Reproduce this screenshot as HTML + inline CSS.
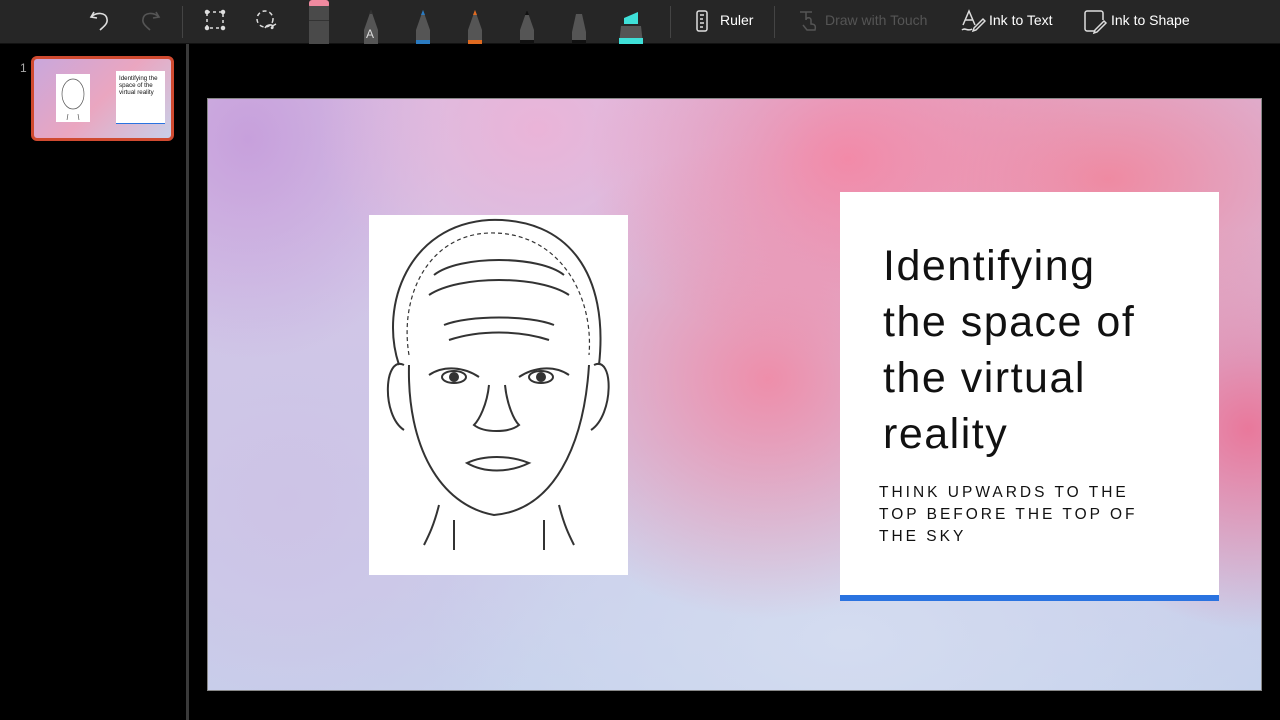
<!DOCTYPE html>
<html><head><meta charset="utf-8"><style>
*{margin:0;padding:0;box-sizing:border-box}
body{width:1280px;height:720px;background:#000;overflow:hidden;font-family:"Liberation Sans",sans-serif;position:relative}
.tb{position:absolute;left:0;top:0;width:1280px;height:44px;background:#262626;border-bottom:1px solid #111}
.tb .t{position:absolute;top:12px;font-size:14px;color:#fff}
.sep{position:absolute;top:6px;width:1px;height:32px;background:#444}
.pen{position:absolute;top:8px}
.side{position:absolute;left:186px;top:44px;width:3px;height:676px;background:#3a3a3a}
.slide{position:absolute;left:207px;top:98px;width:1055px;height:593px;border:1px solid #888;overflow:hidden;
background:
radial-gradient(ellipse 260px 200px at 640px 60px,#f28aa8 0%,rgba(242,138,168,0) 100%),
radial-gradient(ellipse 260px 240px at 560px 280px,#ee8eaa 0%,rgba(238,142,170,0) 100%),
radial-gradient(ellipse 330px 200px at 900px 80px,#ef8aa2 0%,rgba(239,138,162,0) 100%),
radial-gradient(ellipse 200px 200px at 1040px 330px,#e9789b 0%,rgba(233,120,155,0) 100%),
radial-gradient(ellipse 220px 180px at 330px 30px,#eab4d8 0%,rgba(234,180,216,0) 100%),
radial-gradient(ellipse 200px 220px at 40px 40px,#c7a0dc 0%,rgba(199,160,220,0) 100%),
radial-gradient(ellipse 420px 220px at 640px 540px,#d4dcf0 0%,rgba(212,220,240,0) 100%),
radial-gradient(ellipse 300px 300px at 80px 400px,#cdc3e6 0%,rgba(205,195,230,0) 100%),
linear-gradient(180deg,#d6c0e4 0%,#d0cbe9 55%,#c6d2ec 100%)}
.card{position:absolute;left:632px;top:93px;width:379px;height:409px;background:#fff;border-bottom:6px solid #2a73e0}
.card h1{position:absolute;left:43px;top:46px;font-weight:normal;font-size:43px;line-height:56px;color:#111;letter-spacing:1.5px;font-family:"Liberation Sans",sans-serif}
.card p{position:absolute;left:39px;top:290px;font-size:15.5px;line-height:22px;letter-spacing:3px;color:#111}
.pic{position:absolute;left:161px;top:116px;width:259px;height:360px;background:#fff}
</style></head><body>
<div class="tb">
<svg style="position:absolute;left:88px;top:8px" width="24" height="26" viewBox="0 0 24 26" fill="none" stroke="#ddd" stroke-width="1.6"><path d="M6 4 L3 9 L9 10"/><path d="M3 9 C8 4 18 4 19 11 C20 16 15 19 12 22"/></svg>
<svg style="position:absolute;left:138px;top:8px" width="24" height="26" viewBox="0 0 24 26" fill="none" stroke="#555" stroke-width="1.6"><path d="M18 4 L21 9 L15 10"/><path d="M21 9 C16 4 6 4 5 11 C4 16 9 19 12 22"/></svg>
<div class="sep" style="left:182px"></div>
<svg style="position:absolute;left:204px;top:9px" width="24" height="24" viewBox="0 0 24 24" fill="none" stroke="#ddd" stroke-width="1.5"><rect x="3" y="3" width="16" height="16" stroke-dasharray="3 3"/><circle cx="3" cy="3" r="1.5" fill="#ddd"/><circle cx="19" cy="3" r="1.5" fill="#ddd"/><circle cx="3" cy="19" r="1.5" fill="#ddd"/><circle cx="19" cy="19" r="1.5" fill="#ddd"/></svg>
<svg style="position:absolute;left:253px;top:8px" width="26" height="26" viewBox="0 0 26 26" fill="none" stroke="#ddd" stroke-width="1.5"><circle cx="12" cy="11" r="8" stroke-dasharray="4 3"/><path d="M12 20 C14 16 20 16 20 19 C20 22 15 20 23 16"/></svg>
<svg class="pen" style="left:308px;top:0" width="22" height="44"><rect x="1" y="0" width="20" height="8" rx="3" fill="#f08aa0"/><rect x="1" y="6" width="20" height="38" fill="#4a4a4a"/><rect x="1" y="20" width="20" height="1" fill="#333"/></svg>
<svg class="pen" style="left:358px" width="26" height="36"><path d="M13 2 L20 22 L20 36 L6 36 L6 22 Z" fill="#555"/><path d="M11 6 L15 6 L13 2Z" fill="#333"/><text x="8" y="30" font-size="12" fill="#ddd" font-family="Liberation Sans">A</text></svg>
<svg class="pen" style="left:410px" width="26" height="36"><path d="M13 2 L20 22 L20 36 L6 36 L6 22 Z" fill="#555"/><path d="M11 7 L15 7 L13 2Z" fill="#2a7ac0"/><rect x="6" y="32" width="14" height="4" fill="#2a7ac0"/></svg>
<svg class="pen" style="left:462px" width="26" height="36"><path d="M13 2 L20 22 L20 36 L6 36 L6 22 Z" fill="#555"/><path d="M11 7 L15 7 L13 2Z" fill="#e06a20"/><rect x="6" y="32" width="14" height="4" fill="#e06a20"/></svg>
<svg class="pen" style="left:514px" width="26" height="36"><path d="M13 2 L20 22 L20 36 L6 36 L6 22 Z" fill="#555"/><path d="M11 7 L15 7 L13 2Z" fill="#111"/><rect x="6" y="32" width="14" height="4" fill="#111"/></svg>
<svg class="pen" style="left:566px" width="26" height="36"><path d="M10 6 L16 6 L20 24 L20 36 L6 36 L6 24 Z" fill="#555"/><rect x="6" y="32" width="14" height="4" fill="#111"/></svg>
<svg class="pen" style="left:616px" width="30" height="36"><path d="M8 10 L22 4 L22 16 L8 16Z" fill="#3fe0d8"/><path d="M5 18 L25 18 L27 36 L3 36Z" fill="#555"/><rect x="3" y="30" width="24" height="6" fill="#3fe0d8"/></svg>
<div class="sep" style="left:670px"></div>
<svg style="position:absolute;left:695px;top:9px" width="14" height="24" viewBox="0 0 14 24" fill="none" stroke="#ddd" stroke-width="1.5"><rect x="2" y="2" width="10" height="20" rx="2"/><path d="M5 6h4M5 10h3M5 14h4M5 18h3"/></svg>
<div class="t" style="left:720px">Ruler</div>
<div class="sep" style="left:774px"></div>
<svg style="position:absolute;left:797px;top:8px" width="22" height="26" viewBox="0 0 22 26" fill="none" stroke="#555" stroke-width="1.5"><path d="M3 4h12M9 4v8M9 12 C9 9 14 9 14 12 L14 16 C18 16 19 18 18 22 L10 22 L6 17"/></svg>
<div class="t" style="left:825px;color:#555">Draw with Touch</div>
<svg style="position:absolute;left:960px;top:8px" width="26" height="26" viewBox="0 0 26 26" fill="none" stroke="#ddd" stroke-width="1.5"><path d="M3 17 L9 3 L15 17 M5 12 L13 12"/><path d="M14 20 L23 11 L25 13 L16 22 L13 23Z"/><path d="M2 22 C5 19 8 24 12 21"/></svg>
<div class="t" style="left:989px">Ink to Text</div>
<svg style="position:absolute;left:1083px;top:8px" width="26" height="28" viewBox="0 0 26 28" fill="none" stroke="#ddd" stroke-width="1.5"><path d="M12 23 L4 23 C3 23 2 22 2 21 L2 5 C2 4 3 3 4 3 L18 3 C19 3 20 4 20 5 L20 12"/><path d="M12 22 L21 13 L23 15 L14 24 L11 25Z"/></svg>
<div class="t" style="left:1111px">Ink to Shape</div>
</div>
<div style="position:absolute;left:20px;top:61px;color:#aaa;font-size:12px">1</div>
<div style="position:absolute;left:31px;top:56px;width:143px;height:85px;border:3px solid #d04a30;border-radius:6px;overflow:hidden;background:linear-gradient(135deg,#c9a7dc,#eaa6c0 50%,#c8cfe8)">
<div style="position:absolute;left:22px;top:15px;width:34px;height:48px;background:#fff"><svg width="34" height="48" viewBox="0 0 34 48" fill="none" stroke="#555" stroke-width=".7"><ellipse cx="17" cy="20" rx="11" ry="15"/><path d="M12 40 L11 46 M22 40 L23 46"/></svg></div>
<div style="position:absolute;left:82px;top:12px;width:49px;height:53px;background:#fff;border-bottom:1px solid #2a73e0;font-size:6.2px;line-height:7px;padding:4px 3px;color:#111">Identifying the space of the virtual reality</div>
</div>
<div class="side"></div>
<div class="slide">
<div class="pic">
<svg width="259" height="360" viewBox="0 0 259 360" fill="none" stroke="#333" stroke-width="2">
<path d="M30 150 C10 90 40 10 120 5 C200 2 240 60 230 150"/>
<path d="M40 140 C30 80 60 20 120 18 C190 16 225 80 220 140" stroke-dasharray="4 3" stroke-width="1.2"/>
<path d="M40 150 C38 230 70 290 125 300 C185 295 215 230 220 150"/>
<path d="M35 150 C15 140 12 200 35 215 M225 150 C245 140 245 200 222 215"/>
<path d="M60 160 C75 150 95 152 110 162 M150 162 C165 152 185 150 200 160"/>
<ellipse cx="85" cy="162" rx="12" ry="6"/><ellipse cx="172" cy="162" rx="12" ry="6"/>
<circle cx="85" cy="162" r="4" fill="#333"/><circle cx="172" cy="162" r="4" fill="#333"/>
<path d="M120 170 C118 190 110 205 105 210 C115 218 140 218 150 210 C145 205 138 190 136 170"/>
<path d="M98 248 C115 240 140 240 160 248 C140 258 115 258 98 248Z"/>
<path d="M75 110 C100 100 160 100 185 110 M80 125 C110 115 150 115 180 125 M65 60 C90 40 170 40 195 60 M60 80 C90 60 170 60 200 80"/>
<path d="M70 290 C65 310 60 320 55 330 M190 290 C195 310 200 320 205 330 M85 305 L85 335 M175 305 L175 335"/>
</svg>
</div>
<div class="card">
<h1>Identifying<br>the space of<br>the virtual<br>reality</h1>
<p>THINK UPWARDS TO THE<br>TOP BEFORE THE TOP OF<br>THE SKY</p>
</div>
</div>
</body></html>
